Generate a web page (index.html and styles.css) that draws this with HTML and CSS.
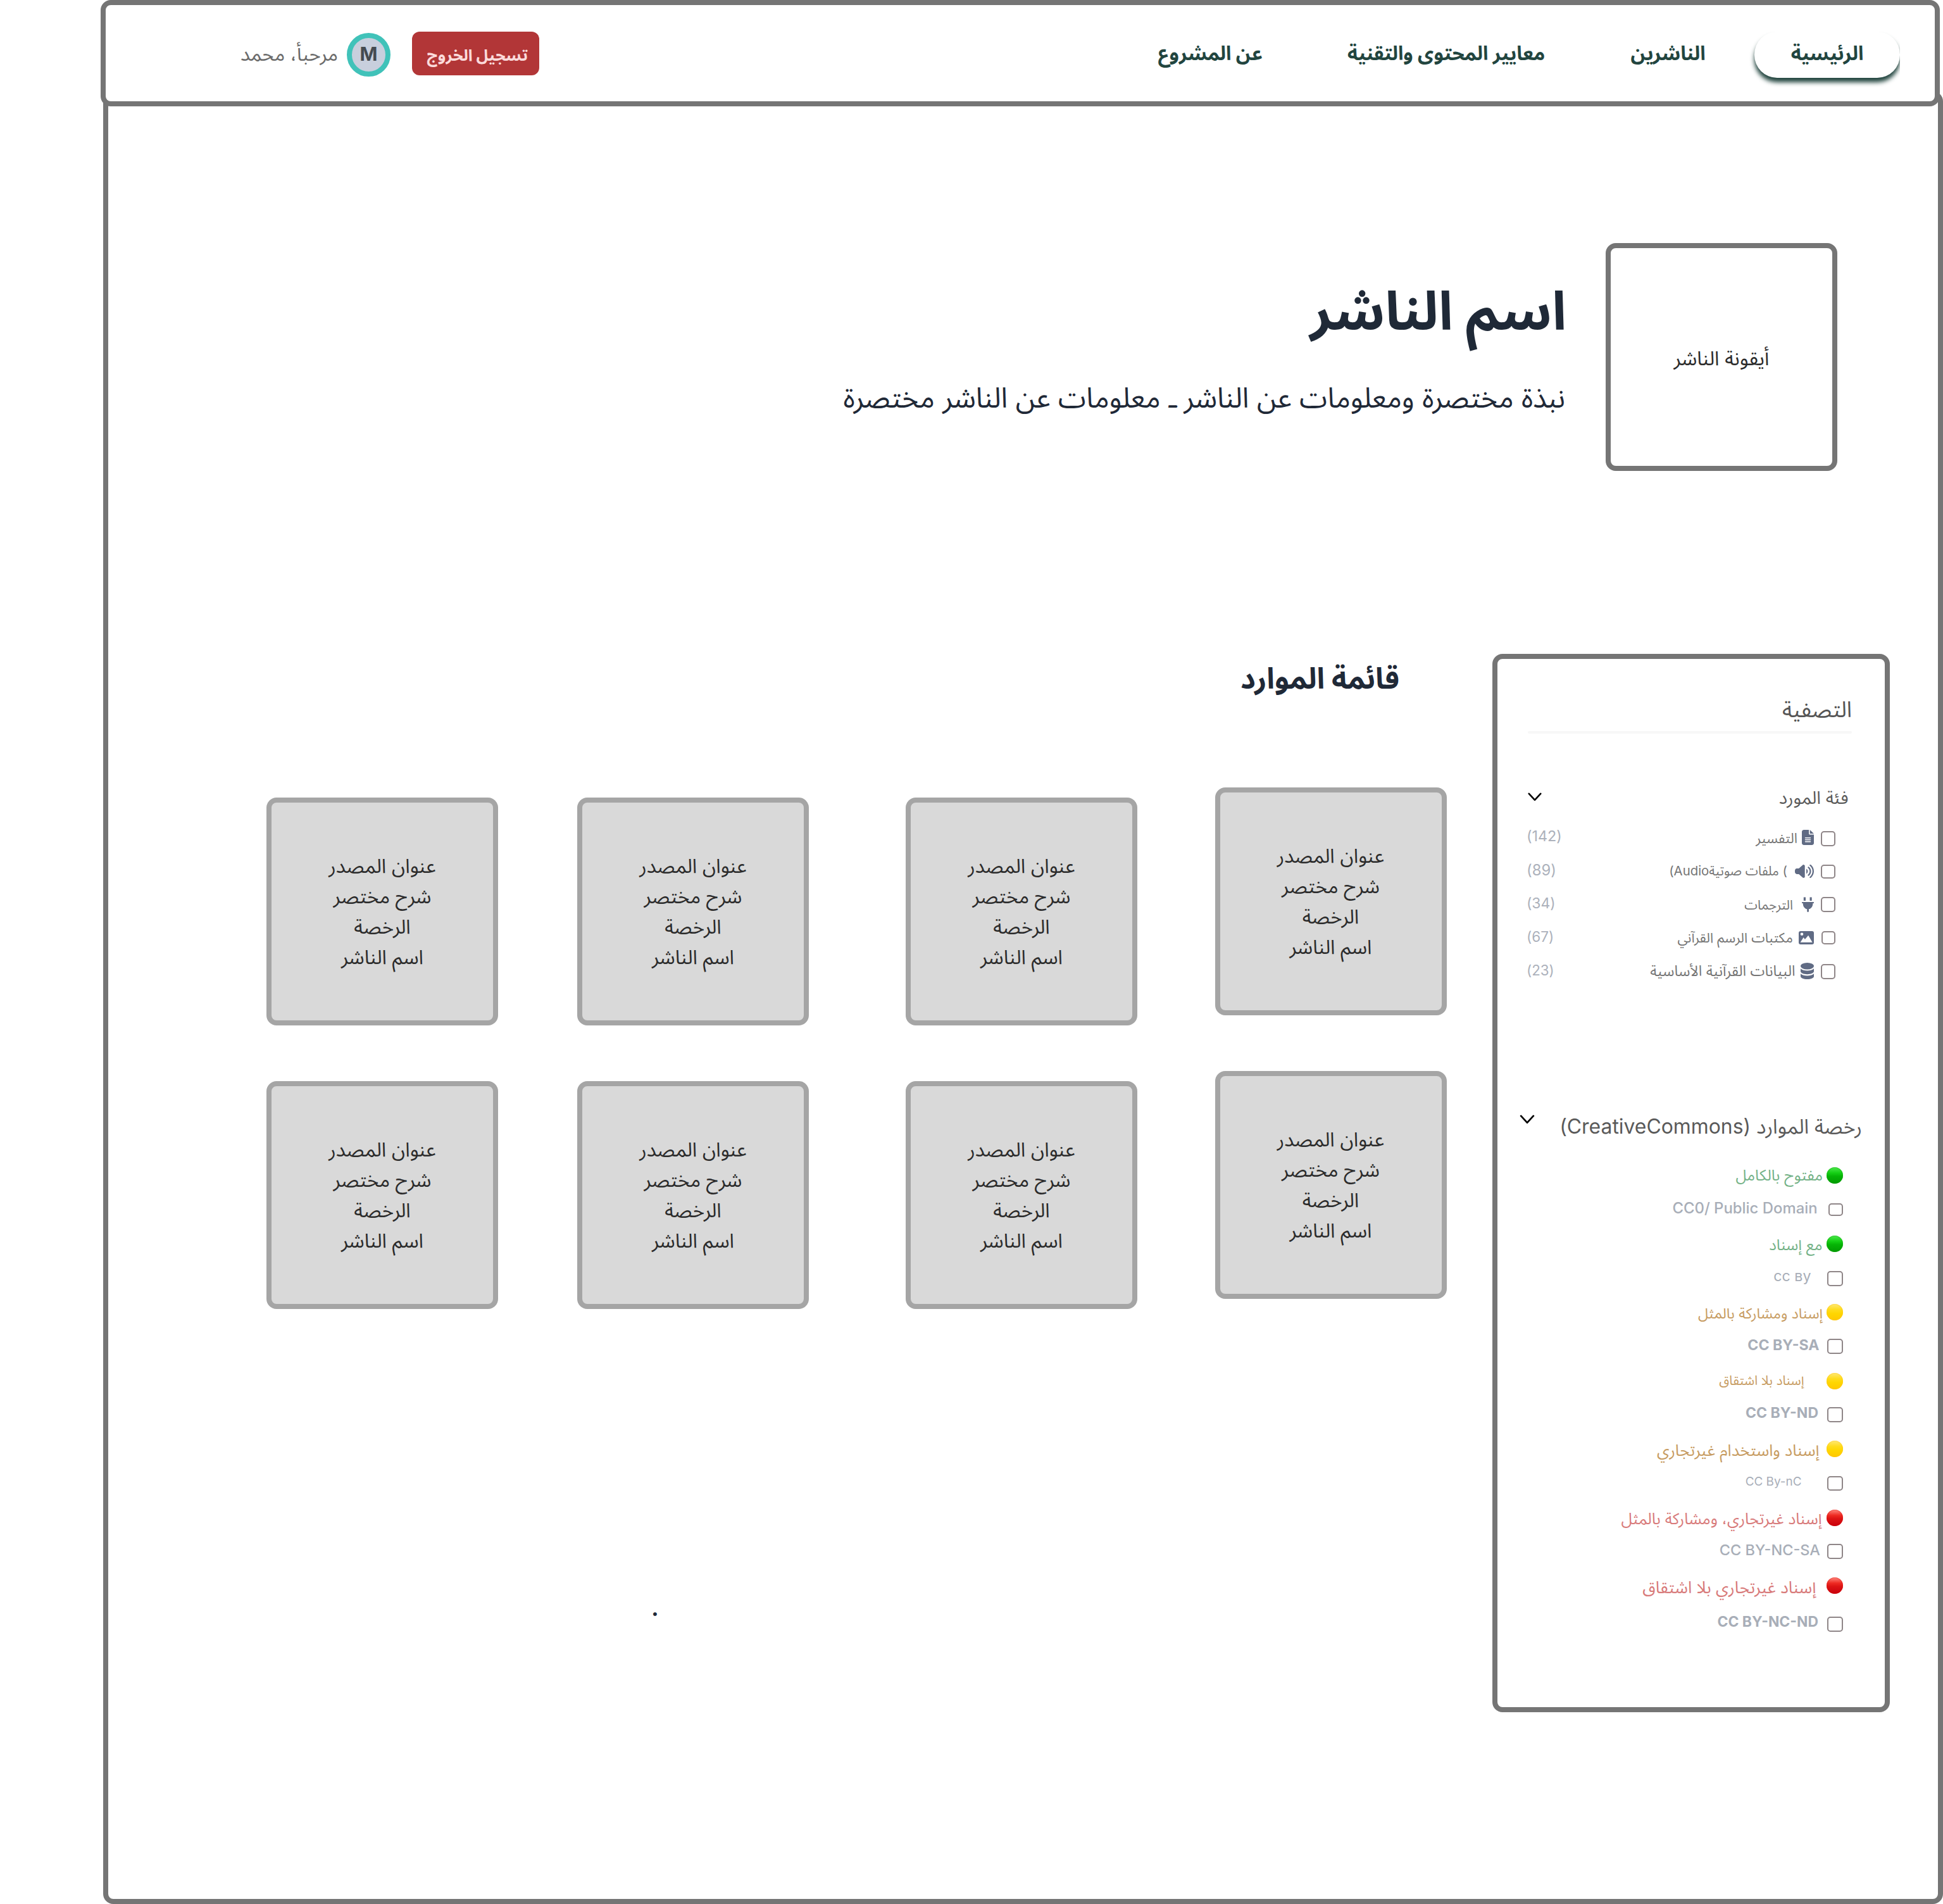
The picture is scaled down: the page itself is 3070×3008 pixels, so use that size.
FILE: index.html
```html
<!DOCTYPE html>
<html lang="ar" dir="rtl">
<head>
<meta charset="utf-8">
<title>اسم الناشر</title>
<link rel="stylesheet" href="styles.css">
</head>
<body>
<header class="topbar">
  <nav class="nav">
    <a class="nav-link nav-link--active">الرئيسية</a>
    <a class="nav-link">الناشرين</a>
    <a class="nav-link">معايير المحتوى والتقنية</a>
    <a class="nav-link">عن المشروع</a>
  </nav>
  <div class="account">
    <button class="logout">تسجيل الخروج</button>
    <span class="avatar">M</span>
    <span class="greeting">مرحبأ، محمد</span>
  </div>
</header>

<div class="frame">
  <section class="hero">
    <div class="publisher-icon">أيقونة الناشر</div>
    <div class="publisher-info">
      <h1 class="publisher-name">اسم الناشر</h1>
      <p class="publisher-bio">نبذة مختصرة ومعلومات عن الناشر ـ معلومات عن الناشر مختصرة</p>
    </div>
  </section>

  <div class="content">
    <aside class="sidebar">
      <h2 class="filter-title">التصفية</h2>
      <div class="divider"></div>

      <div class="group-head group-head--category">
        <h3>فئة المورد</h3>
        <svg class="chevron" viewBox="0 0 22 14"><path d="M1.8 1.8 11 11.8 20.2 1.8"/></svg>
      </div>
      <ul class="categories">
        <li class="category">
          <span class="check"></span>
          <svg class="icon" width="19" height="24" viewBox="0 0 384 512" preserveAspectRatio="none"><path d="M64 0C28.700 0 0 28.700 0 64V448c0 35.300 28.700 64 64 64H320c35.300 0 64-28.700 64-64V160H256c-17.700 0-32-14.300-32-32V0H64zM256 0V128H384L256 0zM112 256H272c8.800 0 16 7.200 16 16s-7.200 16-16 16H112c-8.800 0-16-7.200-16-16s7.200-16 16-16zm0 64H272c8.800 0 16 7.200 16 16s-7.200 16-16 16H112c-8.800 0-16-7.200-16-16s7.200-16 16-16zm0 64H272c8.800 0 16 7.200 16 16s-7.200 16-16 16H112c-8.800 0-16-7.200-16-16s7.200-16 16-16z"/></svg>
          <span class="label">التفسير</span>
          <span class="count">(142)</span>
        </li>
        <li class="category">
          <span class="check"></span>
          <svg class="icon" width="30" height="21" viewBox="0 30 640 452" preserveAspectRatio="none"><path d="M533.600 32.500C598.500 85.200 640 165.800 640 256s-41.500 170.700-106.400 223.500c-10.300 8.400-25.400 6.800-33.800-3.500s-6.800-25.400 3.500-33.800C557.500 398.200 592 331.200 592 256s-34.500-142.200-88.700-186.300c-10.300-8.400-11.800-23.500-3.500-33.800s23.500-11.800 33.800-3.500zM473.100 107c43.200 35.200 70.900 88.900 70.900 149s-27.700 113.800-70.900 149c-10.300 8.400-25.400 6.800-33.800-3.500s-6.800-25.400 3.500-33.800C475.300 341.300 496 301.100 496 256s-20.700-85.300-53.200-111.800c-10.300-8.400-11.800-23.500-3.500-33.800s23.500-11.800 33.800-3.500z"/><path d="M385 170c32 22 48 50 48 86s-16 64-48 86z"/><path d="M301 34.800C312.600 40 335 51.400 335 64V448c0 12.600-22.400 24-34 29.200s-25 3.100-34.400-5.300L131.800 352H64c-35.300 0-64-40-64-74V234c0-35 28.700-74 64-74h67.800L266.700 40.100c9.400-8.400 22.900-10.400 34.300-5.300z"/></svg>
          <span class="label">) ملفات صوتيةAudio)</span>
          <span class="count">(89)</span>
        </li>
        <li class="category">
          <span class="check"></span>
          <svg class="icon" width="19" height="24" viewBox="0 0 19 24"><path d="M2.800.500h3.200V6H2.800zM12.500.500h3.200V6h-3.200zM.800 8h17.400a.8.800 0 0 1 .8.800v1.200h-1.600c0 5-2.600 8.600-6.400 9.300V22.500a1.400 1.400 0 0 1-2.800 0V19.300C4.300 18.600 1.700 15 1.700 10H0V8.800A.8.800 0 0 1 .8 8z"/></svg>
          <span class="label">الترجمات</span>
          <span class="count">(34)</span>
        </li>
        <li class="category">
          <span class="check check--small"></span>
          <svg class="icon" width="24" height="21" viewBox="0 0 24 21"><path fill-rule="evenodd" d="M3 0h18a3 3 0 0 1 3 3v15a3 3 0 0 1-3 3H3a3 3 0 0 1-3-3V3a3 3 0 0 1 3-3zM5 2.400a2.300 2.300 0 1 0 0 4.600 2.300 2.300 0 0 0 0-4.600zM2.600 17.800h19L15.200 6.800 9.900 13 7.600 10z"/></svg>
          <span class="label">مكتبات الرسم القرآني</span>
          <span class="count">(67)</span>
        </li>
        <li class="category">
          <span class="check"></span>
          <svg class="icon" width="21" height="26" viewBox="0 0 21 26"><ellipse cx="10.500" cy="5.200" rx="10.500" ry="5.200"/><path d="M0 9.300c2.400 2.300 6.300 3.300 10.500 3.300S18.600 11.600 21 9.300v4.200c0 2.600-4.600 4.700-10.500 4.700S0 16.100 0 13.500zM0 17.200c2.400 2.300 6.300 3.200 10.500 3.200s8.100-.9 10.500-3.200v4.200c0 2.600-4.600 4.600-10.500 4.600S0 24 0 21.400z"/></svg>
          <span class="label">البيانات القرآنية الأساسية</span>
          <span class="count">(23)</span>
        </li>
      </ul>

      <div class="group-head group-head--license">
        <h3>رخصة الموارد (CreativeCommons)</h3>
        <svg class="chevron" viewBox="0 0 22 14"><path d="M1.800 1.800 11 11.800 20.200 1.800"/></svg>
      </div>
      <ul class="licenses">
        <li class="license license--open">
          <div class="license-name"><i class="dot"></i><span>مفتوح بالكامل</span></div>
          <div class="license-code"><span class="check"></span><bdi>CC0/ Public Domain</bdi></div>
        </li>
        <li class="license license--open">
          <div class="license-name"><i class="dot"></i><span>مع إسناد</span></div>
          <div class="license-code"><span class="check"></span><bdi>cc вy</bdi></div>
        </li>
        <li class="license license--partial">
          <div class="license-name"><i class="dot"></i><span>إسناد ومشاركة بالمثل</span></div>
          <div class="license-code"><span class="check"></span><bdi>CC BY-SA</bdi></div>
        </li>
        <li class="license license--partial">
          <div class="license-name"><i class="dot"></i><span>إسناد بلا اشتقاق</span></div>
          <div class="license-code"><span class="check"></span><bdi>CC BY-ND</bdi></div>
        </li>
        <li class="license license--partial">
          <div class="license-name"><i class="dot"></i><span>إسناد واستخدام غيرتجاري</span></div>
          <div class="license-code"><span class="check"></span><bdi>CC By-nC</bdi></div>
        </li>
        <li class="license license--closed">
          <div class="license-name"><i class="dot"></i><span>إسناد غيرتجاري، ومشاركة بالمثل</span></div>
          <div class="license-code"><span class="check"></span><bdi>CC BY-NC-SA</bdi></div>
        </li>
        <li class="license license--closed">
          <div class="license-name"><i class="dot"></i><span>إسناد غيرتجاري بلا اشتقاق</span></div>
          <div class="license-code"><span class="check"></span><bdi>CC BY-NC-ND</bdi></div>
        </li>
      </ul>
    </aside>

    <main class="resources">
      <h2 class="resources-title">قائمة الموارد</h2>
      <div class="columns">
        <div class="column">
          <article class="card"><p>عنوان المصدر</p><p>شرح مختصر</p><p>الرخصة</p><p>اسم الناشر</p></article>
          <article class="card"><p>عنوان المصدر</p><p>شرح مختصر</p><p>الرخصة</p><p>اسم الناشر</p></article>
        </div>
        <div class="column">
          <article class="card"><p>عنوان المصدر</p><p>شرح مختصر</p><p>الرخصة</p><p>اسم الناشر</p></article>
          <article class="card"><p>عنوان المصدر</p><p>شرح مختصر</p><p>الرخصة</p><p>اسم الناشر</p></article>
        </div>
        <div class="column">
          <article class="card"><p>عنوان المصدر</p><p>شرح مختصر</p><p>الرخصة</p><p>اسم الناشر</p></article>
          <article class="card"><p>عنوان المصدر</p><p>شرح مختصر</p><p>الرخصة</p><p>اسم الناشر</p></article>
        </div>
        <div class="column">
          <article class="card"><p>عنوان المصدر</p><p>شرح مختصر</p><p>الرخصة</p><p>اسم الناشر</p></article>
          <article class="card"><p>عنوان المصدر</p><p>شرح مختصر</p><p>الرخصة</p><p>اسم الناشر</p></article>
        </div>
      </div>
      <p class="footnote">.</p>
    </main>
  </div>
</div>
</body>
</html>
```
FILE: styles.css
```css
* { box-sizing: border-box; margin: 0; padding: 0; }

body {
  width: 3070px;
  height: 3008px;
  overflow: hidden;
  background: #fff;
  font-family: Inter, "Noto Sans Arabic", "Noto Sans", sans-serif;
  white-space: nowrap;
}

ul { list-style: none; }

/* Top bar */
.topbar {
  position: relative;
  z-index: 1;
  display: flex;
  align-items: flex-start;
  justify-content: space-between;
  width: 2906px;
  height: 168px;
  margin-right: 5px;
  padding: 0 55px 0 213px;
  border: 8px solid #757575;
  border-radius: 16px;
  background: #fff;
}

.nav {
  display: flex;
  margin-top: 42px;
  color: #22453f;
  font-size: 31px;
  font-weight: 700;
  line-height: 48px;
}

.nav-link { height: 73px; padding-top: 9.700px; }
.nav-link--active {
  width: 230px;
  border-radius: 36px;
  background: #fff;
  box-shadow: 0 7px 7px #22453f;
  clip-path: inset(0 0 -24px -12px);
  text-align: center;
}
.nav-link:nth-child(2) { margin-right: 77.400px; }
.nav-link:nth-child(3) { margin-right: 135.500px; font-size: 30.900px; }
.nav-link:nth-child(4) { margin-right: 134px; }

.account { display: flex; align-items: flex-start; line-height: 40px; }

.logout {
  width: 201px;
  height: 69px;
  margin-top: 42px;
  padding: 4px 18px 0 0;
  border: 0;
  border-radius: 12px;
  background: #b23637;
  color: #fbdadb;
  font: 700 25.200px/40px Inter, "Noto Sans Arabic", sans-serif;
  text-align: right;
}

.avatar {
  width: 69px;
  height: 69px;
  margin: 44px 34px 0 0;
  border: 8px solid #40c2b9;
  border-radius: 50%;
  background: #c8cfdd;
  color: #454a50;
  font-size: 30px;
  font-weight: 700;
  line-height: 51px;
  text-align: center;
}

.greeting {
  margin: 56.500px 14px 0 0;
  color: #6b6b6b;
  font-size: 30.900px;
}

/* Page frame */
.frame {
  width: 2907px;
  height: 2864px;
  margin-top: -24px;
  padding-top: 232px;
  border: 8px solid #757575;
  border-radius: 16px;
  background: #fff;
}

.hero { display: flex; height: 360px; padding-right: 159px; }

.publisher-icon {
  display: flex;
  align-items: center;
  justify-content: center;
  width: 366px;
  height: 360px;
  padding-top: 3px;
  border: 8px solid #757575;
  border-radius: 16px;
  color: #2b2b2b;
  font-size: 31.100px;
  line-height: 48px;
}

.publisher-info { color: #1f2937; }
.publisher-name {
  margin: 46.200px 62px 0 0;
  font-size: 84.500px;
  font-weight: 700;
  line-height: 120px;
}
.publisher-bio {
  margin: 45.600px 64px 0 0;
  font-size: 44.500px;
  line-height: 64px;
}

.content {
  display: flex;
  align-items: flex-start;
  gap: 72px;
  margin-top: 289px;
  padding-right: 76px;
}

/* Filter sidebar */
.sidebar {
  width: 628px;
  height: 1672px;
  padding: 55.400px 36px 0 35px;
  border: 8px solid #757575;
  border-radius: 16px;
}

.filter-title {
  margin-right: 16px;
  color: #555;
  font-size: 34.700px;
  font-weight: 400;
  line-height: 48px;
}

.divider {
  height: 4px;
  margin: 10.600px 16px 0 13px;
  border-radius: 2px;
  background: #f7f7f7;
}

.group-head { display: flex; align-items: flex-start; justify-content: space-between; }
.group-head h3 { color: #5a5a5a; font-weight: 400; }
.chevron { fill: none; stroke: #000; stroke-width: 2.600; stroke-linecap: round; stroke-linejoin: round; }

.group-head--category { height: 60px; margin: 81px 21.500px 0 13px; }
.group-head--category h3 { font-size: 28px; line-height: 40px; }
.group-head--category .chevron { width: 22px; height: 14px; margin-top: 12.500px; }

.group-head--license { height: 74px; margin-top: 191.500px; }
.group-head--license h3 { font-size: 31.900px; line-height: 48px; }
.group-head--license .chevron { width: 24px; height: 15px; margin-top: 4.500px; }

.check {
  flex: none;
  width: 23px;
  height: 24px;
  border: 2px solid #8f8688;
  border-radius: 5px;
}

.categories { margin: 0 42px 0 11px; }
.category { display: flex; align-items: flex-start; height: 53px; line-height: 40px; }
.category .check { margin-top: 13px; }
.category .check--small { width: 22px; height: 21px; margin-left: 1px; }
.icon { margin-right: 11px; fill: #606b84; }
.label { color: #757575; }
.count { margin-right: auto; color: #acb1bb; }

.category:nth-child(1) .icon { margin-top: 11px; }
.category:nth-child(1) .label { margin: 4px 7px 0 0; font-size: 22px; }
.category:nth-child(1) .count { margin-top: 1.500px; font-size: 23.300px; }

.category:nth-child(2) .check { height: 22px; }
.category:nth-child(2) .icon { margin-top: 13px; }
.category:nth-child(2) .label { margin: 3px 12px 0 0; font-size: 20.400px; }
.category:nth-child(2) .count { margin-top: 2.500px; font-size: 23.800px; }

.category:nth-child(3) .check { margin-top: 11px; }
.category:nth-child(3) .icon { margin-top: 11px; }
.category:nth-child(3) .label { margin: 4px 14px 0 0; font-size: 20.900px; }
.category:nth-child(3) .count { margin-top: 1.400px; font-size: 22.900px; }

.category:nth-child(4) .check { margin-top: 12px; }
.category:nth-child(4) .icon { margin-top: 12px; }
.category:nth-child(4) .label { margin: 2.500px 9px 0 0; font-size: 21.700px; }
.category:nth-child(4) .count { margin-top: .8px; font-size: 22.500px; }

.category:nth-child(5) .check { margin-top: 11px; }
.category:nth-child(5) .icon { margin-top: 9px; }
.category:nth-child(5) .label { margin: 2.500px 8.500px 0 0; font-size: 23.200px; }
.category:nth-child(5) .count { margin-top: 1.500px; font-size: 22.300px; }

.licenses { margin-right: 30px; line-height: 40px; }
.license-name, .license-code { display: flex; align-items: flex-start; height: 54px; }
.license-code { color: #a8aeb8; }
.license-code .check { width: 25px; margin-top: 15px; }

.dot {
  flex: none;
  width: 26px;
  height: 26px;
  margin-top: 14px;
  border-radius: 50%;
}
.license--open { color: #74b287; }
.license--open .dot { background: linear-gradient(#4fe84f, #14cf14 35%, #06b406 55%, #019a01); box-shadow: inset 0 0 2px #00a000; }
.license--partial { color: #c79c62; }
.license--partial .dot { background: linear-gradient(#ffe978, #ffdc1c 35%, #ffd600 60%, #ffc800); box-shadow: inset 0 0 2px #ffbe00; }
.license--closed { color: #d87a7a; }
.license--closed .dot { background: linear-gradient(#ff8a80, #ee2a22 35%, #dc1414 55%, #c8000c); box-shadow: inset 0 0 2px #d80000; }

.license:nth-child(1) .license-name span { margin: 6px 6px 0 0; font-size: 24.300px; }
.license:nth-child(1) .check { width: 23px; height: 20px; margin-top: 17px; }
.license:nth-child(1) bdi { margin: 5px 17.400px 0 0; font-size: 23.900px; font-weight: 450; }

.license:nth-child(2) .license-name span { margin: 7.400px 6.500px 0 0; font-size: 24.300px; }
.license:nth-child(2) .check { margin-top: 16px; }
.license:nth-child(2) bdi { margin: 3.500px 25.500px 0 0; font-size: 23.200px; }

.license:nth-child(3) .license-name span { margin: 8.500px 6px 0 0; font-size: 23.100px; }
.license:nth-child(3) bdi { margin: 4.500px 12.500px 0 0; font-size: 23.100px; font-weight: 700; }

.license:nth-child(4) .dot { margin-top: 15px; }
.license:nth-child(4) .license-name span { margin: 6.500px 35.500px 0 0; font-size: 20.600px; }
.license:nth-child(4) bdi { margin: 3.600px 14px 0 0; font-size: 23px; font-weight: 700; }

.license:nth-child(5) .license-name span { margin: 8.500px 11.500px 0 0; font-size: 25.600px; }
.license:nth-child(5) .check { height: 23px; margin-top: 16px; }
.license:nth-child(5) bdi { margin: 4.100px 40.500px 0 0; font-size: 18.900px; }

.license:nth-child(6) .dot { margin-top: 15px; }
.license:nth-child(6) .license-name span { margin: 8.300px 7.500px 0 0; font-size: 24.900px; }
.license:nth-child(6) bdi { margin: 5px 11px 0 0; font-size: 23.500px; font-weight: 550; }

.license:nth-child(7) .license-name span { margin: 8.200px 16.500px 0 0; font-size: 26.400px; }
.license:nth-child(7) .check { margin-top: 22px; }
.license:nth-child(7) bdi { margin: 9.500px 14px 0 0; font-size: 22.900px; font-weight: 700; }

/* Resource list */
.resources { color: #1f2937; }
.resources-title {
  margin: 6.200px 75px 0 0;
  font-size: 46.100px;
  font-weight: 700;
  line-height: 64px;
}

.columns { display: flex; align-items: flex-start; margin-top: 140.800px; }
.column { display: flex; flex-direction: column; gap: 88px; }
.column:nth-child(n+2) { margin-top: 16px; }
.column:nth-child(1) { margin-right: .5px; }
.column:nth-child(2) { margin-right: 122.500px; }
.column:nth-child(3) { margin-right: 153px; }
.column:nth-child(4) { margin-right: 125px; }

.card {
  display: flex;
  flex-direction: column;
  justify-content: center;
  width: 366px;
  height: 360px;
  border: 8px solid #a5a5a5;
  border-radius: 16px;
  background: #d9d9d9;
  color: #2b2b2b;
  font-size: 31.100px;
  line-height: 48px;
  text-align: center;
}

.footnote {
  margin: 436.800px 1244.600px 0 0;
  font-size: 44.500px;
  line-height: 64px;
}
```
